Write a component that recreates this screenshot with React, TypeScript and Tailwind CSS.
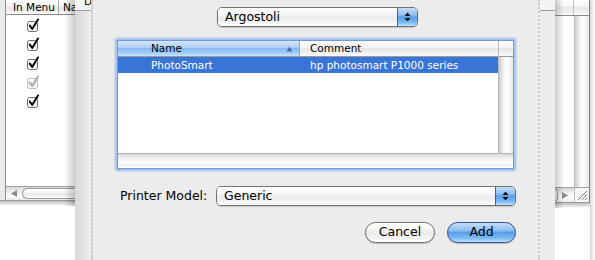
import React from "react";

const gelWhite =
  "bg-[linear-gradient(to_bottom,#ffffff_0%,#f7f7f7_35%,#ebebeb_50%,#f1f1f1_75%,#ffffff_100%)]";
const gelBlue =
  "bg-[linear-gradient(to_bottom,#c4ddf8_0%,#8dbef2_40%,#5b9ce9_50%,#7dbbf6_80%,#bce3ff_100%)]";
const headWhite =
  "bg-[linear-gradient(to_bottom,#ffffff_0%,#f4f4f4_45%,#e7e7e7_50%,#efefef_80%,#fbfbfb_100%)]";
const headBlue =
  "bg-[linear-gradient(to_bottom,#d3e6fa_0%,#abcff5_45%,#88baf0_50%,#a2ccf7_80%,#c8e3fc_100%)]";

function Arrows() {
  return (
    <svg width="7" height="12" viewBox="0 0 7 12">
      <path d="M3.5 1.5 L6.5 5 L0.5 5 Z" fill="#111" />
      <path d="M0.5 7 L6.5 7 L3.5 10.5 Z" fill="#111" />
    </svg>
  );
}

function Check({ dim }: { dim?: boolean }) {
  const c = dim ? "#a9a9a9" : "#000";
  const b = dim ? "#bdbdbd" : "#6c6c6c";
  return (
    <svg width="14" height="14" viewBox="0 0 14 14">
      <defs>
        <linearGradient id="cbg" x1="0" y1="0" x2="0" y2="1">
          <stop offset="0" stopColor="#ffffff" />
          <stop offset="0.5" stopColor="#ececec" />
          <stop offset="1" stopColor="#fafafa" />
        </linearGradient>
      </defs>
      <rect x="1.5" y="3.5" width="10" height="10" rx="2" fill="url(#cbg)" stroke={b} />
      <path
        d="M3.8 7.6 L6.2 11 L12 1.4"
        fill="none"
        stroke={c}
        strokeWidth="1.9"
        strokeLinecap="round"
        strokeLinejoin="round"
      />
    </svg>
  );
}

function Popup({ label, className }: { label: string; className: string }) {
  return (
    <div
      className={`${className} h-[20px] flex rounded-[5px] border border-[#727272] overflow-hidden shadow-[0_1px_1px_rgba(0,0,0,0.18)]`}
    >
      <div className={`flex-1 ${gelWhite} flex items-center pl-[7px] text-[12.5px] leading-none`}>
        {label}
      </div>
      <div
        className={`w-[20px] ${gelBlue} border-l border-[#3f5f9c] flex items-center justify-center`}
      >
        <Arrows />
      </div>
    </div>
  );
}

export default function App() {
  const checks = [false, false, false, true, false];
  return (
    <div className="w-[595px] h-[260px] flex overflow-hidden bg-white text-black font-[family-name:'DejaVu_Sans',sans-serif]">
      {/* Left background window */}
      <div className="w-[75px] shrink-0 flex flex-col relative">
        <div className="h-[201px] flex bg-[#e8e8e8] border-b border-[#9a9a9a]">
          <div className="w-[5px] shrink-0 bg-[#ebebeb]" />
          <div className="flex-1 flex flex-col bg-white border-l border-[#8f8f8f] overflow-hidden">
            <div className={`h-[15px] shrink-0 flex border-b border-[#8c8c8c] ${headWhite} text-[10.5px] leading-none`}>
              <div className="w-[53px] shrink-0 border-r border-[#a8a8a8] pl-[7px] flex items-center whitespace-nowrap">
                In Menu
              </div>
              <div className="pl-[4px] flex items-center whitespace-nowrap">Name</div>
            </div>
            <div className="flex-1 flex flex-col pt-[3px]">
              {checks.map((d, i) => (
                <div key={i} className="h-[19px] pl-[20px]">
                  <Check dim={d} />
                </div>
              ))}
            </div>
            <div className="h-[14px] shrink-0 flex border-t border-[#a3a3a3] bg-[linear-gradient(to_bottom,#d6d6d6,#f4f4f4_40%,#ffffff_70%,#e9e9e9)]">
              <div className="w-[15px] shrink-0 flex items-center justify-center">
                <svg width="6" height="7" viewBox="0 0 6 7">
                  <path d="M0 3.5 L6 0 L6 7 Z" fill="#8a8a8a" />
                </svg>
              </div>
              <div className="flex-1 py-[1px] pl-[1px]">
                <div className={`h-full rounded-l-full border border-r-0 border-[#9c9c9c] ${gelWhite}`} />
              </div>
            </div>
          </div>
        </div>
        <div className="h-[5px] bg-gradient-to-b from-[#bdbdbd] to-white" />
        <div className="flex-1 bg-white" />
        <div className="absolute top-0 right-0 w-[11px] h-[206px] bg-gradient-to-r from-transparent to-[rgba(0,0,0,0.2)] pointer-events-none" />
      </div>

      {/* Parent window left strip */}
      <div className="w-[18px] shrink-0 flex flex-col bg-[linear-gradient(to_right,#d8d8d8,#eeeeee)] border-r-2 border-dotted border-[#cbcbcb]">
        <div className="h-[11px] border-b border-[#9c9c9c] overflow-hidden pl-[9px] bg-[#f5f5f5]">
          <div className="text-[10.5px] leading-[12px] -mt-[5px] whitespace-nowrap">De</div>
        </div>
      </div>

      {/* Sheet */}
      <div className="w-[445px] shrink-0 bg-[#ececec] flex flex-col">
        <div className="pt-[7px] pl-[124px]">
          <Popup label="Argostoli" className="w-[201px]" />
        </div>

        <div className="mt-[11px] ml-[22px] w-[401px] h-[133px] rounded-[3px] border-2 border-[#a9c7f0] shadow-[0_0_2px_rgba(90,140,220,0.6)]">
          <div className="w-full h-full border border-[#7299d6] bg-white flex flex-col">
            <div className="flex h-[112px]">
              <div className="w-[380px] flex flex-col">
                <div className="h-[16px] flex border-b border-[#9a9a9a] text-[10.5px] leading-none">
                  <div className={`w-[181px] ${headBlue} pl-[33px] pr-[6px] flex items-center justify-between`}>
                    <span>Name</span>
                    <svg width="7" height="6" viewBox="0 0 7 6">
                      <path d="M3.5 0.5 L6.5 5.5 L0.5 5.5 Z" fill="#4a6a9a" />
                    </svg>
                  </div>
                  <div className={`flex-1 ${headWhite} border-l border-[#a6a6a6] pl-[10px] flex items-center`}>
                    Comment
                  </div>
                </div>
                <div className="h-[16px] flex bg-[#3875d7] text-white text-[10.5px] leading-none">
                  <div className="w-[181px] pl-[33px] flex items-center">PhotoSmart</div>
                  <div className="flex-1 pl-[11px] flex items-center whitespace-nowrap">
                    hp photosmart P1000 series
                  </div>
                </div>
                <div className="flex-1 bg-white" />
              </div>
              <div className="w-[15px] flex flex-col border-l border-[#b9b9b9]">
                <div className={`h-[16px] ${headWhite} border-b border-[#9a9a9a]`} />
                <div className="flex-1 bg-[linear-gradient(to_right,#cbcbcb,#f6f6f6_35%,#ffffff_60%,#e6e6e6)]" />
              </div>
            </div>
            <div className="h-[13px] border-t border-[#b5b5b5] bg-[linear-gradient(to_bottom,#d9d9d9,#f3f3f3_40%,#fbfbfb_70%,#ededed)]" />
          </div>
        </div>

        <div className="mt-[15px] pl-[27px] flex items-center h-[20px]">
          <div className="w-[96px] text-[12.5px] leading-none whitespace-nowrap">Printer Model:</div>
          <Popup label="Generic" className="w-[300px]" />
        </div>

        <div className="mt-[16px] pr-[22px] flex justify-end gap-[12px]">
          <div
            className={`w-[70px] h-[21px] rounded-full border border-[#6e6e6e] ${gelWhite} shadow-[0_1px_1px_rgba(0,0,0,0.2)] flex items-center justify-center text-[12.5px] leading-none`}
          >
            Cancel
          </div>
          <div
            className={`w-[69px] h-[21px] rounded-full border border-[#2f4f93] ${gelBlue} shadow-[0_1px_1px_rgba(0,0,0,0.2)] flex items-center justify-center text-[12.5px] leading-none`}
          >
            Add
          </div>
        </div>
      </div>

      {/* Parent window right strip */}
      <div className="w-[17px] shrink-0 flex flex-col bg-[#ececec] border-l-2 border-dotted border-[#c9c9c9]">
        <div className="h-[11px] border-b border-[#9c9c9c] bg-[#f4f4f4]" />
      </div>

      {/* Right background window */}
      <div className="w-[35px] shrink-0 flex flex-col relative">
        <div className="h-[203px] flex flex-col bg-white border-r border-[#7f7f7f] border-b border-b-[#9a9a9a]">
          <div className={`h-[16px] shrink-0 flex border-b border-[#8c8c8c] ${headWhite}`}>
            <div className="flex-1 border-r border-[#c2c2c2]" />
            <div className="w-[15px]" />
          </div>
          <div className="flex-1 flex">
            <div className="flex-1 bg-white" />
            <div className="w-[15px] border-l border-[#bdbdbd] bg-[linear-gradient(to_right,#cbcbcb,#f6f6f6_35%,#ffffff_60%,#e6e6e6)]" />
          </div>
          <div className="h-[15px] shrink-0 flex border-t border-[#a3a3a3] bg-[linear-gradient(to_bottom,#d6d6d6,#f4f4f4_40%,#ffffff_70%,#e9e9e9)]">
            <div className="w-[3px] py-[1px]">
              <div className={`h-full rounded-r-full border border-l-0 border-[#9c9c9c] ${gelWhite}`} />
            </div>
            <div className="flex-1 flex items-center pl-[4px]">
              <svg width="6" height="7" viewBox="0 0 6 7">
                <path d="M6 3.5 L0 0 L0 7 Z" fill="#8a8a8a" />
              </svg>
            </div>
            <div className="w-[15px] border-l border-[#bdbdbd] bg-[#f6f6f6] flex items-end justify-end p-[1px]">
              <svg width="12" height="12" viewBox="0 0 12 12">
                <path d="M11 2 L2 11 M11 5.5 L5.5 11 M11 9 L9 11" stroke="#7a7a7a" strokeWidth="1" />
              </svg>
            </div>
          </div>
        </div>
        <div className="h-[5px] bg-gradient-to-b from-[#bdbdbd] to-white" />
        <div className="flex-1 bg-white" />
        <div className="absolute top-0 left-0 w-[9px] h-[208px] bg-gradient-to-l from-transparent to-[rgba(0,0,0,0.2)] pointer-events-none" />
      </div>
      <div className="w-[5px] shrink-0 bg-[linear-gradient(to_right,#d8d8d8,#ffffff)]" />
    </div>
  );
}
